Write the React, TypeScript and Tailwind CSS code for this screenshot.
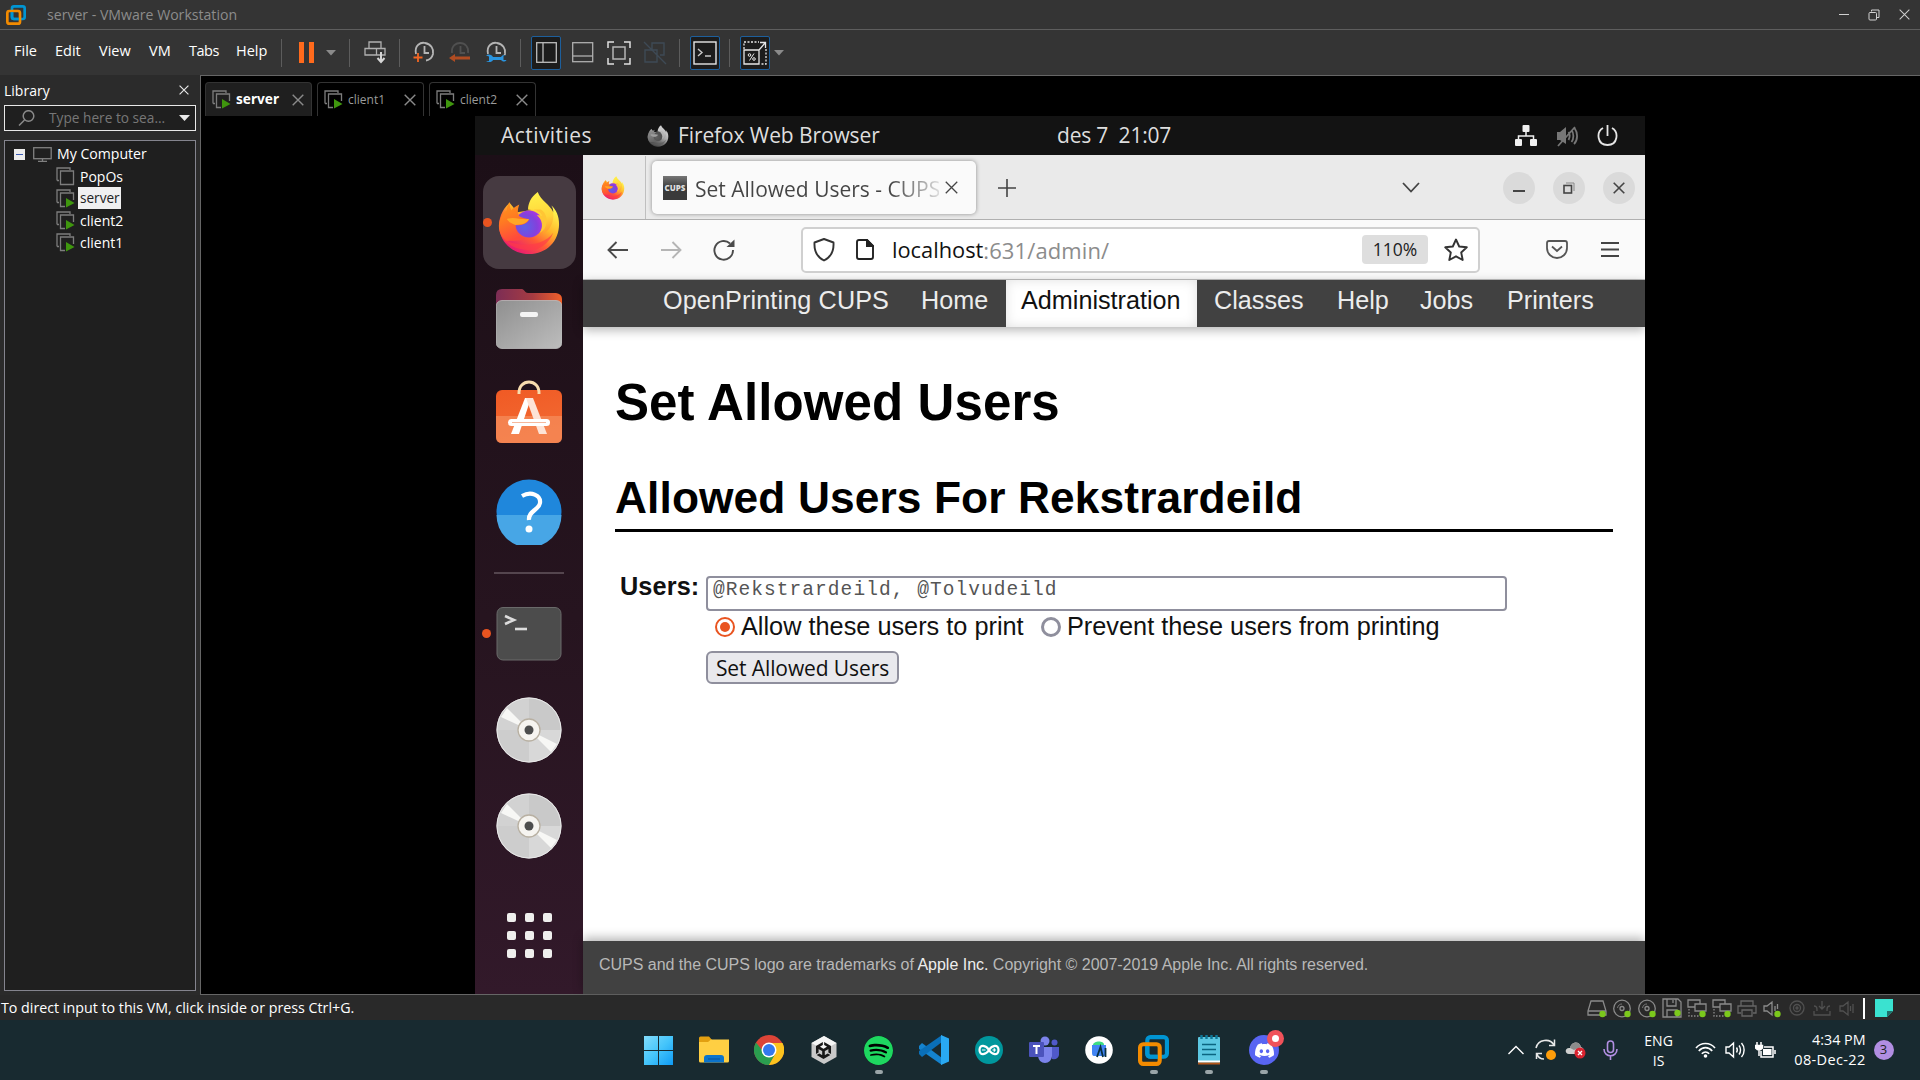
import React from 'react';
import { SiSpotify, SiUnity, SiDiscord } from 'react-icons/si';

const UI = "font-['Open_Sans','Noto_Sans',sans-serif]";
const ARIAL = "font-['Liberation_Sans',Arial,sans-serif]";

function Firefox({ size, gray = false }: { size: number; gray?: boolean }) {
  return (
    <svg width={size} height={size} viewBox="0 0 64 66" className={gray ? 'shrink-0 brightness-90 grayscale' : 'shrink-0'}>
      <defs>
        <linearGradient id="ffBody" x1="0.85" y1="0.1" x2="0.2" y2="0.95">
          <stop offset="0" stopColor="#fff44f" />
          <stop offset="0.35" stopColor="#ffb52a" />
          <stop offset="0.62" stopColor="#ff5a36" />
          <stop offset="1" stopColor="#e5127a" />
        </linearGradient>
        <linearGradient id="ffFlame" x1="0.5" y1="0" x2="0.6" y2="1">
          <stop offset="0" stopColor="#fff14a" />
          <stop offset="0.6" stopColor="#ffd43a" />
          <stop offset="1" stopColor="#ff9c2c" />
        </linearGradient>
        <radialGradient id="ffGlobe" cx="0.35" cy="0.6" r="0.75">
          <stop offset="0" stopColor="#5b62e8" />
          <stop offset="0.6" stopColor="#8440dc" />
          <stop offset="1" stopColor="#b833e1" />
        </radialGradient>
        <linearGradient id="ffFox" x1="0" y1="0" x2="0.3" y2="1">
          <stop offset="0" stopColor="#ff9a18" />
          <stop offset="0.5" stopColor="#ff7a22" />
          <stop offset="1" stopColor="#ff4a3c" />
        </linearGradient>
      </defs>
      <path d="M12 12C3 20 1 30 1 36C2 53 15 65 32 65C50 65 63 52 63 34C63 26 60 19 55 15C57 18 57 20 57 22L44 18L20 22Z" fill="url(#ffBody)" />
      <path d="M41 1C34 6 31 13 31 19L42 21C49 26 50 36 47 44C54 40 58 32 57 22C54 14 44 10 41 1Z" fill="url(#ffFlame)" />
      <circle cx="32" cy="34" r="14" fill="url(#ffGlobe)" />
      <path d="M30 19C37 18 43 20 46 26C43 25 41 25 40 25C46 29 47 38 43 43C52 39 53 24 44 19Z" fill="#ffc634" />
      <path d="M12 11C10 15 9 17 9 20C3 24 1 31 1 37C1 42 4 48 8 52C12 50 20 53 28 49C21 47 17 42 18 35C25 36 29 34 32 30C31 28 27 29 22 26C20 23 20 20 22 14C18 16 15 18 14 20C12 17 12 14 12 11Z" fill="url(#ffFox)" />
      <path d="M9 29C16 26 24 30 32 29C29 34 25 35 18 35C15 34 11 32 9 29Z" fill="#ffa726" />
      <path d="M3 46C10 57 44 61 57 43C52 55 42 62 31 61C16 60 7 54 3 46Z" fill="#ff3a48" opacity="0.65" />
    </svg>
  );
}

function VmLogo({ size }: { size: number }) {
  return (
    <svg width={size} height={size} viewBox="0 0 30 30" className="shrink-0" fill="none" strokeWidth="4">
      <rect x="9" y="2" width="19" height="19" rx="3" stroke="#0095d3" />
      <rect x="2" y="9" width="19" height="19" rx="3" stroke="#f38b00" />
      <path d="M9 11V18C9 20 10 21 12 21H19" stroke="#0095d3" />
    </svg>
  );
}

function VmIcon({ running = true }: { running?: boolean }) {
  return (
    <svg width="19" height="19" viewBox="0 0 19 19" fill="none" stroke="#7d7d7d" strokeWidth="1.300" className="shrink-0">
      <path d="M1 13.500V1H14V3M1 13.500H3" />
      <path d={running ? 'M17.500 11V4H4.500V17.500H9' : 'M4.500 4H17.500V17.500H4.500Z'} />
      {running && <path d="M10 9L18.500 14L10 18.500Z" fill="#3f960e" stroke="none" />}
    </svg>
  );
}

function Cross({ size, color, w = 1.4 }: { size: number; color: string; w?: number }) {
  return (
    <svg width={size} height={size} viewBox="0 0 12 12" className="shrink-0">
      <path d="M0.700 0.700L11.300 11.300M11.300 0.700L0.700 11.300" stroke={color} strokeWidth={w} fill="none" />
    </svg>
  );
}

function Sep({ className = '' }: { className?: string }) {
  return <div className={'h-7 w-px shrink-0 bg-[#5c5c5c] ' + className} />;
}

function TitleBar() {
  return (
    <div className="flex h-[29px] shrink-0 items-center bg-[#343434] pl-[6px] pr-[10px]">
      <VmLogo size={20} />
      <span className="ml-[21px] text-[14.100px] text-[#8c8c8c]">server - VMware Workstation</span>
      <div className="ml-auto flex items-center gap-[19px]">
        <div className="h-px w-[10px] bg-[#d0d0d0]" />
        <svg width="12" height="12" viewBox="0 0 12 12" fill="none" stroke="#d0d0d0">
          <path d="M3.500 2.500V1H11V8.500H9" />
          <rect x="1" y="3.500" width="7.500" height="7.500" rx="1" />
        </svg>
        <Cross size={11} color="#d0d0d0" w={1.1} />
      </div>
    </div>
  );
}

function Clock({ dim = false, children }: { dim?: boolean; children: React.ReactNode }) {
  return (
    <svg width="22" height="24" viewBox="0 0 22 24" fill="none" className="shrink-0">
      <path d={dim ? 'M3 12C2 4 8 2 11 2C16 2 20 6 19 12' : 'M3 13C1 4 8 1 12 2C18 3 21 8 20 13C19 17 16 19 13 19.500'} stroke={dim ? '#505050' : '#b5b5b5'} strokeWidth="1.800" />
      <path d="M11.500 5V12H16" stroke={dim ? '#505050' : '#b5b5b5'} strokeWidth="1.800" />
      {children}
    </svg>
  );
}

function MenuBar() {
  return (
    <div className="flex h-[46px] shrink-0 items-center border-t border-[#5e5e5e] bg-[#343434] text-[14.500px] text-white">
      <div className="mb-[3px] ml-[14px] flex w-[267px]">
        <span className="w-[41px]">File</span>
        <span className="w-[44px]">Edit</span>
        <span className="w-[50px]">View</span>
        <span className="w-[40px]">VM</span>
        <span className="w-[47px] tracking-[-0.500px]">Tabs</span>
        <span>Help</span>
      </div>
      <Sep />
      <div className="ml-[17px] flex gap-[5px]">
        <div className="h-[21px] w-[5px] bg-[#ff6a1c]" />
        <div className="h-[21px] w-[5px] bg-[#ff6a1c]" />
      </div>
      <svg width="10" height="6" viewBox="0 0 10 6" className="ml-[12px]"><path d="M0 0H10L5 5.500Z" fill="#8a8a8a" /></svg>
      <Sep className="ml-[13px]" />
      <svg width="22" height="23" viewBox="0 0 22 23" fill="none" stroke="#b0b0b0" strokeWidth="1.300" className="ml-[14px]">
        <path d="M5 7V1H17V7M1 7.500H21V14H1ZM12.500 7.500V14" />
        <path d="M17 11V20M13.500 17L17 21L20.500 17" stroke="#d5d5d5" strokeWidth="2" />
      </svg>
      <Sep className="ml-[13px]" />
      <div className="ml-[13px] flex gap-[14px]">
        <Clock><path d="M0.500 16.500H9.500M5 12V21" stroke="#f26522" strokeWidth="1.800" /></Clock>
        <Clock dim><path d="M0 17L6 13V15.500H21V18.500H6V21Z" fill="#b04c22" /></Clock>
        <Clock>
          <rect x="0" y="14" width="22" height="7" fill="#343434" />
          <path d="M1 14.500C4 12.500 7 14 8 16H16C17 13.500 20 13.500 21.500 14.500H18.500V19H21.500C20 21.500 17 20.500 16 19H8C7 21.500 3 21.500 1 20H4V15.500Z" fill="#2a95e0" />
        </Clock>
      </div>
      <Sep className="ml-[13px]" />
      <div className="ml-[10px] flex h-[34px] w-[30px] items-center justify-center rounded-[2px] border border-[#1d5f9c] bg-[#1c1c1c]">
        <svg width="21" height="21" viewBox="0 0 21 21" fill="none" stroke="#bdbdbd" strokeWidth="1.300"><rect x="0.700" y="0.700" width="19.600" height="19.600" /><path d="M7 1V20" /></svg>
      </div>
      <svg width="22" height="21" viewBox="0 0 22 21" fill="none" stroke="#b0b0b0" strokeWidth="1.300" className="ml-[11px]"><rect x="0.700" y="0.700" width="20" height="19" /><path d="M1 14H21" /></svg>
      <svg width="24" height="24" viewBox="0 0 24 24" fill="none" stroke="#e0e0e0" strokeWidth="1.500" className="ml-[13px]">
        <path d="M1 7V1H7M17 1H23V7M23 17V23H17M7 23H1V17" /><rect x="6" y="6" width="12" height="12" stroke="#b5b5b5" />
      </svg>
      <svg width="24" height="24" viewBox="0 0 24 24" fill="none" stroke="#3e4a55" strokeWidth="1.400" className="ml-[12px]">
        <path d="M9 10V2H21V14H17M2 9H14V21H2ZM1 1L23 23" />
      </svg>
      <Sep className="ml-[12px]" />
      <div className="ml-[10px] flex h-[34px] w-[30px] items-center justify-center rounded-[2px] border border-[#1d5f9c] bg-[#1c1c1c]">
        <svg width="24" height="24" viewBox="0 0 24 24" fill="none" stroke="#e6e6e6" strokeWidth="1.400"><rect x="1" y="1" width="22" height="22" /><path d="M5 8L9 11.500L5 15M12 15H18" stroke="#c8c8c8" /></svg>
      </div>
      <Sep className="ml-[9px]" />
      <div className="ml-[10px] flex h-[34px] w-[30px] items-center justify-center rounded-[2px] border border-[#1d5f9c] bg-[#1c1c1c]">
        <svg width="24" height="24" viewBox="0 0 24 24" fill="none" stroke="#e6e6e6" strokeWidth="1.300">
          <path d="M1 8V1H16M23 8V23H17" strokeDasharray="2 1.500" />
          <path d="M1 9H16V23H1ZM16 9L22 2M17 1.500H22.500V7" />
          <circle cx="6.500" cy="14" r="1.300" strokeWidth="1" /><circle cx="11" cy="18" r="1.300" strokeWidth="1" /><path d="M11 12.500L6.500 19.500" strokeWidth="1" />
        </svg>
      </div>
      <svg width="10" height="6" viewBox="0 0 10 6" className="ml-[4px]"><path d="M0 0H10L5 5.500Z" fill="#8a8a8a" /></svg>
    </div>
  );
}

function Library() {
  const vms = [
    { name: 'PopOs', on: false, sel: false },
    { name: 'server', on: true, sel: true },
    { name: 'client2', on: true, sel: false },
    { name: 'client1', on: true, sel: false },
  ];
  return (
    <div className="flex w-[200px] shrink-0 flex-col bg-[#2b2b2b] pl-1 pr-[4px] text-[14px] text-white">
      <div className="flex h-[30px] items-center justify-between pr-[7px]">
        <span className="pt-px">Library</span>
        <Cross size={10} color="#e8e8e8" />
      </div>
      <div className="flex h-[26px] shrink-0 items-center border border-[#e8e8e8] bg-[#1f1f1f] pl-[13px] pr-[5px] text-[13.700px] text-[#777]">
        <svg width="17" height="16" viewBox="0 0 17 16" fill="none" stroke="#8a8a8a" strokeWidth="1.500"><circle cx="10.500" cy="6" r="5.300" /><path d="M6.500 10L1 15.500" /></svg>
        <span className="ml-[14px] pt-px">Type here to sea...</span>
        <svg width="11" height="6" viewBox="0 0 11 6" className="ml-auto"><path d="M0 0H11L5.500 6Z" fill="#e8e8e8" /></svg>
      </div>
      <div className="mb-[4px] mt-[9px] flex-1 border border-[#84848e] bg-[#1f1f1f] pt-[2px]">
        <div className="flex h-[22px] items-center pl-[9px]">
          <div className="flex size-[11px] items-center justify-center bg-[#ececec]"><div className="h-px w-[7px] bg-[#3b5bb5]" /></div>
          <svg width="19" height="15" viewBox="0 0 19 15" fill="none" stroke="#808080" strokeWidth="1.300" className="ml-[8px]"><rect x="0.700" y="0.700" width="17.500" height="11" /><path d="M9.500 12V14M5 14.300H14" /></svg>
          <span className="ml-[5px] text-[14.100px]">My Computer</span>
        </div>
        {vms.map((v) => (
          <div key={v.name} className="flex h-[22px] items-center pl-[51px]">
            <VmIcon running={v.on} />
            <span className={v.sel ? 'ml-[3px] flex h-[22px] w-[43px] items-center bg-[#f0f0f0] pl-[2px] text-[13.600px] text-[#222]' : 'ml-[5px]'}>{v.name}</span>
          </div>
        ))}
      </div>
    </div>
  );
}

function VmTabs() {
  return (
    <div className="flex h-[40px] items-end gap-[5px] pl-[4px] text-[12px] text-[#9a9a9a]">
      {['server', 'client1', 'client2'].map((n, i) => (
        <div key={n} className={'flex h-[34px] w-[107px] items-center rounded-t-[4px] border border-b-0 border-[#333] pl-[6px] ' + (i === 0 ? 'bg-[#1f1f1f]' : '')}>
          <VmIcon />
          <span className={i === 0 ? "ml-[5px] w-[56px] font-['Noto_Sans'] text-[13.600px] font-bold text-white" : 'ml-[5px] w-[56px]'}>{n}</span>
          <Cross size={12} color="#8a8a8a" />
        </div>
      ))}
    </div>
  );
}

function GnomeBar() {
  return (
    <div className="flex h-[39px] shrink-0 items-center bg-[#131313] text-[21px] font-medium text-[#dedede]">
      <span className="ml-[26px] w-[146px] pt-px tracking-[0.450px]">Activities</span>
      <Firefox size={22} gray />
      <span className="ml-[9px] w-[379px] pt-px tracking-[-0.100px]">Firefox Web Browser</span>
      <span className="w-[458px] whitespace-pre tracking-[-0.200px]">des 7  21:07</span>
      <svg width="22" height="21" viewBox="0 0 22 21" fill="#f0f0f0"><rect x="7.500" width="7" height="7" rx="1" /><rect y="14" width="7" height="7" rx="1" /><rect x="15" y="14" width="7" height="7" rx="1" /><path d="M11 6V11M3.500 15V11H18.500V15" stroke="#f0f0f0" strokeWidth="1.500" fill="none" /></svg>
      <svg width="22" height="22" viewBox="0 0 22 22" className="ml-[19px]" fill="none" stroke="#777" strokeWidth="1.800"><path d="M1 7H4L10 2V19L4 15H1Z" fill="#777" stroke="none" /><path d="M12.500 7C14 9 14 12 12.500 15M15.500 5C18 8 18 14 15.500 17M18.500 3C22 8 22 15 18 19M19 2L2 21" /></svg>
      <svg width="21" height="22" viewBox="0 0 21 22" className="ml-[19px]" fill="none" stroke="#e6e6e6" strokeWidth="1.800"><path d="M6 3C-1 7 0 20 10.500 20C21 20 22 7 15 3M10.500 0V11" /></svg>
    </div>
  );
}

function Disc({ className }: { className: string }) {
  return (
    <svg width="66" height="66" viewBox="0 0 66 66" className={className}>
      <circle cx="33" cy="33" r="32.500" fill="#d2d2d2" />
      <path d="M33 33V1A32 32 0 0 1 65 33Z" fill="#c9c9c9" /><path d="M33 33H1A32 32 0 0 0 33 65Z" fill="#cdcdcd" />
      <path d="M33 33L65 33A32 32 0 0 1 33 65Z" fill="#d8d8d8" />
      <path d="M33 33L5 20L11 11ZM33 33L61 47L55 55Z" fill="#f7f7f5" />
      <circle cx="33" cy="33" r="32" fill="none" stroke="#e8e8e8" />
      <circle cx="33" cy="33" r="11" fill="#f6f4f0" stroke="#b8b0a2" strokeWidth="1.300" />
      <circle cx="33" cy="33" r="4.500" fill="#4d4d4d" />
    </svg>
  );
}

function Dock() {
  return (
    <div className="flex w-[108px] shrink-0 flex-col items-center bg-linear-to-b from-[#1c0f17] from-0% via-[#26141f] via-55% to-[#32192a] to-100%">
      <div className="relative mt-[21px] flex size-[93px] shrink-0 items-center justify-center rounded-[16px] bg-[#463a41]">
        <Firefox size={64} />
        <div className="absolute left-0 top-[42px] size-[9px] rounded-full bg-[#e95420]" />
      </div>
      <svg width="66" height="60" viewBox="0 0 66 60" className="mt-[20px] shrink-0">
        <defs>
          <linearGradient id="folderBack" x1="0" x2="1"><stop offset="0" stopColor="#7c2d55" /><stop offset="0.550" stopColor="#a53b42" /><stop offset="1" stopColor="#f0602a" /></linearGradient>
          <linearGradient id="folderFront" x1="0" y1="0" x2="1" y2="1"><stop offset="0" stopColor="#8f8f8f" /><stop offset="1" stopColor="#bdbdbd" /></linearGradient>
        </defs>
        <path d="M6 0H26C28 0 29 4 32 4H60Q66 5 66 10V30H0V6Q0 0 6 0Z" fill="url(#folderBack)" />
        <rect y="11.500" width="66" height="48" rx="6" fill="url(#folderFront)" stroke="#bcbcbc" strokeWidth="0.800" />
        <rect x="24" y="23" width="18" height="5" rx="2" fill="#f4f4f4" />
      </svg>
      <svg width="66" height="64" viewBox="0 0 66 64" className="mt-[31px] shrink-0">
        <defs><linearGradient id="store" x1="0" y1="0" x2="0.300" y2="1"><stop offset="0" stopColor="#f05a24" /><stop offset="1" stopColor="#f26a33" /></linearGradient></defs>
        <rect y="10" width="66" height="53" rx="6" fill="url(#store)" />
        <path d="M0 36H66V57Q66 63 60 63H6Q0 63 0 57Z" fill="#f58a57" opacity="0.800" />
        <path d="M23 14C22 -2 44 -2 43 14" fill="none" stroke="#f7dcae" strokeWidth="3" />
        <path d="M29 18H35L23 54H15Z" fill="#fff" /><path d="M30 18H37L51 54H43Z" fill="#fde3d6" />
        <rect x="12" y="39" width="42" height="7" rx="3.500" fill="#fff" /><path d="M16 42.500H50" stroke="#f5b89c" />
      </svg>
      <svg width="66" height="66" viewBox="0 0 66 66" className="mt-[35px] shrink-0">
        <circle cx="33" cy="33" r="32.500" fill="#1f87dc" /><path d="M0.500 36A32.500 32.500 0 0 0 65.500 36Z" fill="#47a6e6" />
        <path d="M26 17C35 12 45 16 44 24C43 31 32 32 33 41" fill="none" stroke="#fff" strokeWidth="4.200" />
        <circle cx="33" cy="50" r="3.500" fill="#fff" />
      </svg>
      <div className="mt-[27px] h-[2px] w-[70px] shrink-0 bg-[#54454e]" />
      <div className="relative mt-[33px] flex h-[54px] w-[108px] shrink-0 justify-center">
        <div className="absolute left-[7px] top-[22px] size-[9px] rounded-full bg-[#e95420]" />
        <svg width="66" height="54" viewBox="0 0 66 54"><rect x="1" y="0.500" width="64" height="52.500" rx="6" fill="#4c4c4c" stroke="#6a6a6a" /><path d="M9 9L18 13L9 17" fill="none" stroke="#dcdcdc" strokeWidth="2.600" /><path d="M19 22H31" stroke="#dcdcdc" strokeWidth="2.600" /></svg>
      </div>
      <Disc className="mt-[36px] shrink-0" />
      <Disc className="mt-[30px] shrink-0" />
      <div className="mt-[54px] grid shrink-0 grid-cols-3 gap-[9px]">
        {Array.from({ length: 9 }, (_, i) => <div key={i} className="size-[9px] rounded-[2px] bg-[#efefed]" />)}
      </div>
    </div>
  );
}

function TabStrip() {
  return (
    <div className="flex h-[64px] shrink-0 items-center border-b border-[#b0b0b0] bg-[#eaeaea]">
      <div className="flex h-full w-[63px] items-center justify-center border-r border-[#bfbfbf] pr-[3px]"><Firefox size={24} /></div>
      <div className="ml-[6px] flex h-[53px] w-[324px] items-center rounded-[5px] bg-[#fafafa] pl-[11px] shadow-[0_0_4px_rgba(0,0,0,0.4)]">
        <div className="flex h-[24px] w-[24px] shrink-0 items-center justify-center bg-linear-to-b from-[#777] to-[#3a3a3a] to-50% text-[8px] font-extrabold text-[#ddd]">CUPS</div>
        <span className="ml-[8px] mt-[2px] w-[244px] overflow-hidden whitespace-nowrap bg-linear-to-r from-[#444] from-80% to-[#ddd] bg-clip-text text-[21px] leading-[30px] text-transparent">Set Allowed Users - CUPS</span>
        <div className="ml-[6px] flex"><Cross size={13} color="#444" w={1.2} /></div>
      </div>
      <svg width="18" height="18" viewBox="0 0 18 18" className="ml-[22px]"><path d="M9 0V18M0 9H18" stroke="#444" strokeWidth="1.600" /></svg>
      <svg width="18" height="11" viewBox="0 0 18 11" className="ml-[386px]"><path d="M1 1L9 9.500L17 1" fill="none" stroke="#444" strokeWidth="1.800" /></svg>
      <div className="ml-[83px] flex gap-[18px]">
        {[0, 1, 2].map((i) => (
          <div key={i} className="flex size-[32px] items-center justify-center rounded-full bg-[#dadada]">
            {i === 0 && <div className="mt-[7px] h-[2px] w-[12px] bg-[#444]" />}
            {i === 1 && <svg width="12" height="12" viewBox="0 0 12 12" fill="none" stroke="#444" strokeWidth="1.600"><rect x="1" y="3.500" width="7.500" height="7.500" /><path d="M3 1H11V9" stroke="#888" strokeWidth="1" /></svg>}
            {i === 2 && <Cross size={12} color="#444" w={1.6} />}
          </div>
        ))}
      </div>
    </div>
  );
}

function UrlBar() {
  return (
    <div className="flex h-[60px] shrink-0 items-center border-b border-[#c0c0c0] bg-[#fafafa]">
      <svg width="22" height="18" viewBox="0 0 22 18" className="ml-[24px]" fill="none" stroke="#4a4a4a" strokeWidth="1.900"><path d="M21 9H2M9.500 1L1.500 9L9.500 17" /></svg>
      <svg width="22" height="18" viewBox="0 0 22 18" className="ml-[31px]" fill="none" stroke="#b5b5b5" strokeWidth="1.900"><path d="M1 9H20M12.500 1L20.500 9L12.500 17" /></svg>
      <svg width="22" height="22" viewBox="0 0 22 22" className="ml-[31px]" fill="none" stroke="#4a4a4a" strokeWidth="1.900"><path d="M20 11A9.300 9.300 0 1 1 17 4.500" /><path d="M21.500 0.500V8H13.500Z" fill="#4a4a4a" stroke="none" /></svg>
      <div className="ml-[66px] flex h-[46px] w-[679px] items-center rounded-[5px] border-2 border-[#d0d0d0] bg-white pl-[10px]">
        <svg width="22" height="24" viewBox="0 0 22 24" fill="none" stroke="#333" strokeWidth="1.900"><path d="M11 1L20.500 4.500C21 13 18 19 11 22.500C4 19 1 13 1.500 4.500Z" strokeLinejoin="round" /></svg>
        <svg width="18" height="21" viewBox="0 0 18 21" className="ml-[21px]" fill="none" stroke="#222" strokeWidth="1.900"><path d="M11 1H3Q1 1 1 3V18Q1 20 3 20H15Q17 20 17 18V7L11 1V7H17" /><path d="M11 1V7H17Z" fill="#222" /></svg>
        <span className="ml-[18px] pt-px text-[21.800px] text-[#111]">localhost</span><span className="pt-px text-[22px] tracking-[0.100px] text-[#8c8c8c]">:631/admin/</span>
        <div className="ml-auto flex h-[29px] w-[66px] items-center justify-center rounded-[4px] bg-[#dedede] text-[17.500px] font-medium text-[#222]">110%</div>
        <svg width="24" height="24" viewBox="0 0 24 24" className="ml-[16px] mr-[10px]" fill="none" stroke="#333" strokeWidth="1.900" strokeLinejoin="round"><path d="M12 1.500L15.200 8.500L22.800 9.300L17.200 14.500L18.700 22L12 18.300L5.300 22L6.800 14.500L1.200 9.300L8.800 8.500Z" /></svg>
      </div>
      <svg width="22" height="19" viewBox="0 0 22 19" className="ml-[66px]" fill="none" stroke="#555" strokeWidth="1.800"><path d="M3 1H19Q21 1 21 3V8C21 14 16 18 11 18C6 18 1 14 1 8V3Q1 1 3 1ZM6 6.500L11 11L16 6.500" /></svg>
      <svg width="18" height="15" viewBox="0 0 18 15" className="ml-[33px]" stroke="#444" strokeWidth="1.800"><path d="M0 1H18M0 7.500H18M0 14H18" /></svg>
    </div>
  );
}

function CupsPage() {
  return (
    <div className={'flex flex-1 flex-col bg-white text-[#111] ' + ARIAL}>
      <div className="z-10 flex h-[47px] shrink-0 items-center bg-[#414141] pl-[80px] text-[25.200px] leading-[30px] text-[#ececec] shadow-[0_3px_10px_rgba(0,0,0,0.3)]">
        <span className="mb-[7px] w-[258px] tracking-[0.120px]">OpenPrinting CUPS</span>
        <span className="mb-[7px] w-[85px]">Home</span>
        <span className="flex h-[47px] w-[191px] items-center bg-white pb-[7px] pl-[15px] text-[#111] shadow-[inset_0_0_12px_rgba(0,0,0,0.12)]">Administration</span>
        <span className="mb-[7px] ml-[17px] w-[123px]">Classes</span>
        <span className="mb-[7px] w-[83px]">Help</span>
        <span className="mb-[7px] w-[87px]">Jobs</span>
        <span className="mb-[7px]">Printers</span>
      </div>
      <div className="flex flex-1 flex-col px-[32px]">
        <h1 className="mt-[44px] text-[51px] font-bold leading-[64px] tracking-[0.100px] text-black">Set Allowed Users</h1>
        <h2 className="mt-[35px] h-[62px] border-b-[3px] border-black text-[44.300px] font-bold leading-[56px] tracking-[0.100px] text-black">Allowed Users For Rekstrardeild</h2>
        <div className="mt-[44px] flex text-[25.300px] leading-[30px]">
          <div className="-mt-[5px] w-[91px] pl-[5px] font-bold tracking-[0.100px]">Users:</div>
          <div className="flex flex-col items-start">
            <div className="h-[35px] w-[801px] rounded-[4px] border-2 border-[#8f8f9d] bg-white pl-[5px] font-['Liberation_Mono',monospace] text-[19.500px] leading-[25px] tracking-[1.060px] text-[#555]">@Rekstrardeild, @Tolvudeild</div>
            <div className="flex h-[31px] items-center pl-[9px]">
              <div className="flex size-[20px] items-center justify-center rounded-full border-2 border-[#e95420]"><div className="size-[10px] rounded-full bg-[#e95420]" /></div>
              <span className="mb-[2px] ml-[6px] w-[300px]">Allow these users to print</span>
              <div className="size-[20px] rounded-full border-[3px] border-[#8f8f9d]" />
              <span className="mb-[2px] ml-[6px]">Prevent these users from printing</span>
            </div>
            <div className={'mt-[9px] flex h-[33px] w-[193px] items-center justify-center rounded-[6px] border-2 border-[#8f8f9d] bg-[#e9e9ed] text-[21px] tracking-[-0.100px] ' + UI}>Set Allowed Users</div>
          </div>
        </div>
      </div>
      <div className="flex h-[53px] shrink-0 items-center bg-[#414141] pl-[16px] text-[16px] tracking-[-0.020px] text-[#b8b8b8] shadow-[0_-3px_10px_rgba(0,0,0,0.3)]">
        <span className="mb-[5px] whitespace-pre">CUPS and the CUPS logo are trademarks of <span className="text-[#eee]">Apple Inc.</span> Copyright © 2007-2019 Apple Inc. All rights reserved.</span>
      </div>
    </div>
  );
}

function StatusBar() {
  const g = '#8a8a8a';
  const d = '#505050';
  const Dot = <circle cx="15.500" cy="15" r="3.200" fill="#7cc81c" stroke="none" />;
  return (
    <div className="flex h-[25px] shrink-0 items-center bg-[#292929] pl-[1px] text-[14.250px] text-white">
      <span className="pt-px">To direct input to this VM, click inside or press Ctrl+G.</span>
      <div className="ml-auto mr-[27px] flex items-center gap-[5px] pt-px">
        <svg width="20" height="19" viewBox="0 0 20 19" fill="none" stroke={g} strokeWidth="1.300"><path d="M4 2H16L19 12V16H1V12ZM1 12H19" />{Dot}</svg>
        {[0, 1].map((i) => <svg key={i} width="20" height="19" viewBox="0 0 20 19" fill="none" stroke={g} strokeWidth="1.300"><circle cx="10" cy="9.500" r="8.300" /><circle cx="10" cy="9.500" r="2" /><path d="M5.500 9C6 6 8 5 10 5" strokeWidth="0.800" />{Dot}</svg>)}
        <svg width="20" height="20" viewBox="0 0 20 20" fill="none" stroke={g} strokeWidth="1.300"><path d="M1 1H16L19 4V19H1ZM5 1V8H14V1M5 19V12H15V19M11 2V5" />{Dot}</svg>
        {[0, 1].map((i) => <svg key={i} width="20" height="19" viewBox="0 0 20 19" fill="none" stroke={g} strokeWidth="1.300"><path d="M8 8H1V1H13V5M8 5H19V12H8Z" /><path d="M2 10V17H12" strokeDasharray="1.500 1.500" />{Dot}</svg>)}
        <svg width="20" height="19" viewBox="0 0 20 19" fill="none" stroke="#666" strokeWidth="1.300"><path d="M4 7V2H16V7M4 14H1V7H19V14H16M5 11H15V17H5Z" /></svg>
        <svg width="20" height="19" viewBox="0 0 20 19" fill="none" stroke={g} strokeWidth="1.300"><path d="M2 7H5L10 3V16L5 12H2ZM13 7V12M15.500 5V10" />{Dot}</svg>
        <svg width="20" height="19" viewBox="0 0 20 19" fill="none" stroke={d} strokeWidth="1.300"><circle cx="10" cy="9" r="7" /><circle cx="10" cy="9" r="3.500" /><circle cx="10" cy="9" r="1" /></svg>
        <svg width="20" height="19" viewBox="0 0 20 19" fill="none" stroke={d} strokeWidth="1.300"><path d="M10 2V10M7 7L10 10L13 7M2 12V16H18V12M2 7C5 7 5 9 5 12M18 7C15 7 15 9 15 12" /></svg>
        <svg width="20" height="19" viewBox="0 0 20 19" fill="none" stroke={d} strokeWidth="1.300"><path d="M3 7H6L11 3V16L6 12H3ZM13.500 7V12M16 5V14" /></svg>
        <div className="ml-[1px] h-[21px] w-[2px] bg-white" />
        <svg width="18" height="18" viewBox="0 0 18 18" className="ml-[5px]"><path d="M0 0H18V12L12 18H0Z" fill="#3ae2d0" /><path d="M12 18V12H18Z" fill="#1f6f68" /></svg>
      </div>
    </div>
  );
}

function Taskbar() {
  const icons: { on?: boolean; el: React.ReactNode }[] = [
    { el: <svg width="29" height="29" viewBox="0 0 29 29"><defs><linearGradient id="start" x1="0" y1="0" x2="1" y2="1"><stop offset="0" stopColor="#82dcfb" /><stop offset="0.500" stopColor="#45c5fb" /><stop offset="1" stopColor="#0f9bf5" /></linearGradient></defs><path d="M0 0H14V14H0ZM15 0H29V14H15ZM0 15H14V29H0ZM15 15H29V29H15Z" fill="url(#start)" /></svg> },
    { el: <svg width="30" height="28" viewBox="0 0 30 28"><path d="M0 2Q0 0.500 1.500 0.500H10L13 4V12H0Z" fill="#e2a011" /><path d="M0 6H9L12 3.500H30V25Q30 26.500 28.500 26.500H1.500Q0 26.500 0 25Z" fill="#ffcf43" /><path d="M5 26.500V22Q5 19 8 19H22Q25 19 25 22V26.500Z" fill="#0c74cc" /><path d="M9 23H21" stroke="#06509a" /></svg> },
    { el: <svg width="30" height="30" viewBox="0 0 30 30"><circle cx="15" cy="15" r="15" fill="#dc4437" /><path d="M15 15H8L2 7.500A15 15 0 0 0 15 30L21.500 19Z" fill="#2a9d4f" /><path d="M15 8H28.500A15 15 0 0 1 15 30L21.500 18.500Z" fill="#fcc31e" /><circle cx="15" cy="15" r="7.500" fill="#fff" /><circle cx="15" cy="15" r="6" fill="#3478ee" /></svg> },
    { el: <div className="relative flex size-[28px] items-center justify-center"><svg width="26" height="28" viewBox="0 0 26 28" className="absolute"><path d="M13 0L25.500 7V21L13 28L0.500 21V7Z" fill="#c9c9c9" /><path d="M13 0L25.500 7L13 14L0.500 7Z" fill="#f5f5f5" /></svg><SiUnity size={17} color="#181818" className="relative" /></div> },
    { on: true, el: <div className="rounded-full bg-black"><SiSpotify size={29} color="#1ed760" /></div> },
    { el: <svg width="30" height="30" viewBox="0 0 30 30"><path d="M0 10L3 7L23 22V29L0 13Z" fill="#1483cf" transform="translate(0 1)" /><path d="M0 20L3 23L23 8V1L0 17Z" fill="#0a6fb8" transform="translate(0 -1)" /><path d="M22 0L30 3.500V26.500L22 30Z" fill="#29a9f2" /></svg> },
    { el: <svg width="28" height="28" viewBox="0 0 28 28" fill="none"><circle cx="14" cy="14" r="14" fill="#00979d" /><path d="M14 14C11 9 4.500 8 4.500 14S11 19 14 14S23.500 8 23.500 14S17 19 14 14Z" stroke="#fff" strokeWidth="2.200" /><path d="M7 14H10.500M17.500 14H21M19.300 12.300V15.700" stroke="#fff" strokeWidth="1.200" /></svg> },
    { el: <svg width="30" height="28" viewBox="0 0 30 28"><circle cx="16" cy="5" r="4.500" fill="#7b83eb" /><circle cx="25.500" cy="6.500" r="3" fill="#5059c9" /><path d="M20 11H30V19Q29 24 23 23Z" fill="#5059c9" /><path d="M9 11H23V20Q22 27 16 27Q10 27 9 20Z" fill="#7b83eb" /><rect y="6" width="15" height="15" rx="1" fill="#4b53bc" /><path d="M4 10H11M7.500 10V18" stroke="#fff" strokeWidth="2" /></svg> },
    { el: <svg width="28" height="28" viewBox="0 0 28 28"><circle cx="14" cy="14" r="13.800" fill="#fff" /><path d="M8 9C8 5 19 4 19 9Z" fill="#3ddc84" /><path d="M7 9H21V20H9Q7 20 7 17Z" fill="#4285f4" /><path d="M12 21L15.500 11L18 21M20.500 12V21" stroke="#083042" strokeWidth="1.800" fill="none" /></svg> },
    { on: true, el: <VmLogo size={31} /> },
    { on: true, el: <svg width="22" height="30" viewBox="0 0 22 30"><rect y="2" width="22" height="26" rx="1" fill="#5cc8e2" /><rect y="25.500" width="22" height="2" fill="#fff" /><rect y="27.500" width="22" height="2" fill="#b4561a" /><path d="M4 9.500H18M4 14.500H18M4 19.500H18" stroke="#0b6580" strokeWidth="1.700" /><path d="M3.500 0V4M8.500 0V4M13.500 0V4M18.500 0V4" stroke="#0f7898" strokeWidth="2.400" /></svg> },
    { on: true, el: <div className="relative flex size-[30px] items-center justify-center rounded-full bg-[#5865f2]"><SiDiscord size={19} color="#fff" /><div className="absolute -right-[5px] -top-[5px] flex size-[17px] items-center justify-center rounded-full bg-[#f0525a]"><div className="size-[7px] rounded-full bg-white" /></div></div> },
  ];
  return (
    <div className="flex h-[60px] shrink-0 items-center bg-[#182a30] pl-[631px] text-[14px] text-white">
      {icons.map((it, i) => (
        <div key={i} className="relative flex h-[60px] w-[55.050px] shrink-0 items-center justify-center">
          {it.el}
          {it.on && <div className="absolute bottom-[6px] h-[4px] w-[8px] rounded-full bg-[#9aa5a8]" />}
        </div>
      ))}
      <svg width="16" height="10" viewBox="0 0 16 10" className="ml-[216px]" fill="none" stroke="#fff" strokeWidth="1.400"><path d="M0.500 9L8 1.500L15.500 9" /></svg>
      <svg width="22" height="22" viewBox="0 0 22 22" className="ml-[11px]" fill="none" stroke="#e8e8e8" strokeWidth="1.500"><path d="M1 9C3 0 15 -1 19 6M19.500 0.500V6.500H14M9 20C6 20 3 18 2 15M1.500 20V14.500H7" /><circle cx="16" cy="16" r="5" fill="#ff9d0a" stroke="none" /></svg>
      <svg width="21" height="18" viewBox="0 0 21 18" className="ml-[8px]"><path d="M4 13C-1 13 0 6 5 7C6 1 14 -1 16 6C20 7 20 13 17 13Z" fill="#cfcfcf" /><path d="M5 7C6 1 14 -1 16 6L9 9Z" fill="#8c8c8c" /><circle cx="15" cy="12" r="5.500" fill="#d92330" /><path d="M13 10L17 14M17 10L13 14" stroke="#fff" strokeWidth="1.300" /></svg>
      <svg width="15" height="20" viewBox="0 0 15 20" className="ml-[17px]" fill="none" stroke="#b28fe2" strokeWidth="1.600"><rect x="4.500" y="1" width="6" height="11.500" rx="3" /><path d="M1 9C1 18 14 18 14 9M7.500 15.500V20" /></svg>
      <div className="ml-[27px] flex w-[28px] flex-col items-center pt-px leading-[20px]"><span>ENG</span><span>IS</span></div>
      <svg width="21" height="16" viewBox="0 0 21 16" className="ml-[22px]" fill="none" stroke="#fff" strokeWidth="1.600"><path d="M1 6C6 0 15 0 20 6M3.800 9C7.500 4.500 13.500 4.500 17.200 9M6.800 11.800C9 9.300 12 9.300 14.200 11.800" /><circle cx="10.500" cy="14" r="1.800" fill="#fff" stroke="none" /></svg>
      <svg width="21" height="18" viewBox="0 0 21 18" className="ml-[9px]" fill="none" stroke="#fff" strokeWidth="1.400"><path d="M1 6H4L8.500 2V16L4 12H1ZM11.500 6.500C12.500 8 12.500 10 11.500 11.500M14 4.500C16 7 16 11 14 13.500M16.500 2C20 6 20 12 16.500 16" /></svg>
      <svg width="21" height="17" viewBox="0 0 21 17" className="ml-[9px]" fill="none" stroke="#fff" strokeWidth="1.500"><path d="M6 9V15H18V5H9M20 8V12" /><rect x="8" y="7" width="8.500" height="6" fill="#fff" stroke="none" /><path d="M0.500 3.500H7.500V6Q4 10 0.500 6ZM4 8V14" fill="#fff" /><path d="M2 0V4M6 0V4" /></svg>
      <div className="ml-[18px] flex w-[72px] flex-col items-end whitespace-nowrap leading-[20px]"><span className="text-[14.300px]">4:34 PM</span><span className="text-[14.500px] tracking-[0.350px]">08-Dec-22</span></div>
      <div className="ml-[8px] flex size-[20px] items-center justify-center rounded-full bg-[#b18ee2] text-[13px] text-[#222]">3</div>
    </div>
  );
}

export default function App() {
  return (
    <div className={'flex h-[1080px] w-[1920px] flex-col overflow-hidden bg-black ' + UI}>
      <TitleBar />
      <MenuBar />
      <div className="flex min-h-0 flex-1 bg-[#2b2b2b]">
        <Library />
        <div className="flex flex-1 flex-col border-b border-l border-t border-[#666] bg-black">
          <VmTabs />
          <div className="flex flex-1 pl-[274px]">
            <div className="flex h-[878px] w-[1170px] flex-col">
              <GnomeBar />
              <div className="flex flex-1">
                <Dock />
                <div className="flex flex-1 flex-col border-t border-[#eaeaea]">
                  <TabStrip />
                  <UrlBar />
                  <CupsPage />
                </div>
              </div>
            </div>
          </div>
        </div>
      </div>
      <StatusBar />
      <Taskbar />
    </div>
  );
}
